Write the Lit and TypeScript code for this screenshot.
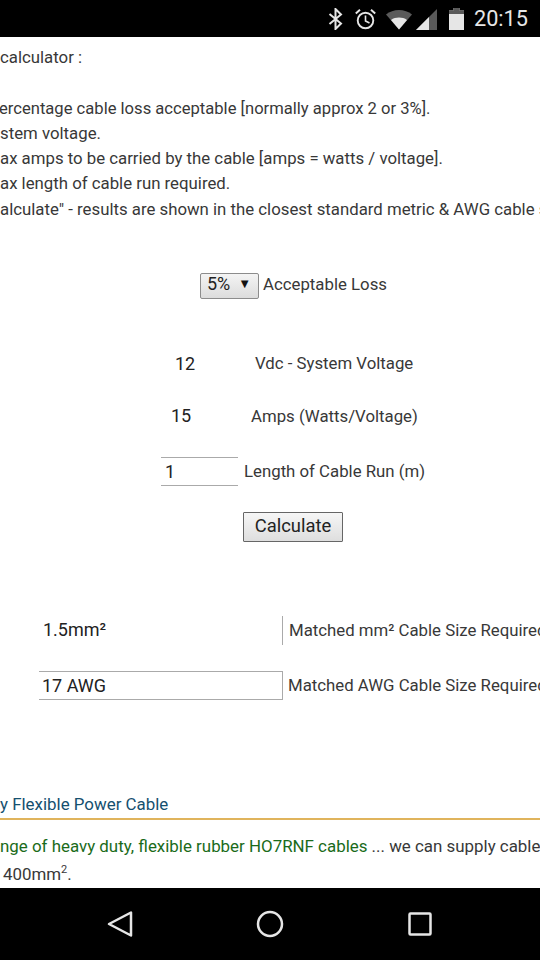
import { LitElement, html, css } from "lit";
import { customElement } from "lit/decorators.js";

@customElement("app-root")
export class AppRoot extends LitElement {
  static styles = css`
    :host { display: flex; flex-direction: column; width: 540px; height: 960px; overflow: hidden; background: #fff;
      font-family: Roboto, "Noto Sans", sans-serif; font-size: 16.8px; color: #383838; }
    .status { height: 37px; flex: none; background: #000; display: flex; align-items: center; justify-content: flex-end; padding-right: 12px; color: #e6e6e6; }
    .status svg { display: block; flex: none; }
    .bt { margin-right: 12px; }
    .alarm { margin-right: 10px; }
    .wifi { margin-right: 4px; }
    .sig { margin-right: 12px; }
    .batt { margin-right: 10px; }
    .time { font-size: 21.7px; line-height: 37px; color: #e6e6e6; }
    main { flex: 1; min-height: 0; overflow: hidden; display: flex; flex-direction: column; white-space: nowrap; }
    .intro { margin: 8.300px 0 0; line-height: 25.200px; font-size: 16.8px; }
    .s1 { margin-left: -1px; font-size: 16.6px; }
    .row { display: flex; align-items: center; }
    .r-loss { margin-top: 51px; padding-left: 200px; gap: 4px; }
    .r-loss .lab { padding-bottom: 4px; }
    .select { flex: none; width: 59px; height: 26px; box-sizing: border-box; border: 1px solid #8c8c8c; border-radius: 2px;
      background: linear-gradient(#f4f4f4, #dcdcdc); display: flex; align-items: center; justify-content: space-between; padding: 0 7px 4px 6px; color: #222; font-size: 18px; }
    .arrow { font-size: 13px; color: #111; }
    .value { flex: none; color: #222; font-size: 18px; }
    .r-v { margin-top: 53px; height: 26px; padding-left: 175px; }
    .r-v .value { width: 80px; }
    .r-a { margin-top: 30px; height: 26px; padding-left: 171px; }
    .r-a .value { width: 80px; }
    .r-l { margin-top: 30px; height: 28px; padding-left: 161px; gap: 6px; }
    .field { flex: none; box-sizing: border-box; width: 77px; height: 29px; border-top: 1px solid #aaa; border-bottom: 1px solid #aaa; padding-left: 4px; line-height: 27px; color: #222; font-size: 18px; }
    .btn { margin: 27px 0 0 243px; width: 100px; height: 30px; flex: none; box-sizing: border-box; border: 1px solid #666; border-radius: 1px;
      background: linear-gradient(#f6f6f6, #dedede); color: #222; font: 18.400px Roboto, sans-serif; padding: 0 0 3px; }
    .r-m { margin-top: 74px; height: 29px; }
    .r-m .value { box-sizing: border-box; width: 283px; height: 29px; padding-left: 43px; line-height: 27px; border-right: 1px solid #aaa; }
    .r-m .lab { margin-left: 6px; flex: none; padding-bottom: 2px; }
    .r-g { margin-top: 26px; height: 29px; }
    .awg { flex: none; box-sizing: border-box; margin-left: 39px; width: 244px; height: 29px; border: 1px solid #aaa; border-left: none; padding-left: 3px; line-height: 27px; color: #222; font-size: 18px; }
    .r-g .lab { margin-left: 5px; flex: none; padding-bottom: 2px; }
    .head { margin-top: 94px; padding-bottom: 4px; border-bottom: 2px solid #e0b45c; color: #15506f; line-height: 20px; height: 20px; flex: none; font-size: 16.9px; }
    .green { color: #1a6b1a; }
    .para { margin: 12px 0 0 0; line-height: 28px; font-size: 16.9px; }
    .para-2 { margin-left: 3px; }
    sup { font-size: 11px; line-height: 0; }
    nav { height: 72px; flex: none; background: #000; display: flex; align-items: center; justify-content: center; gap: 120px; }
    nav svg { display: block; }
  `;

  render() {
    return html`
      <div class="status">
        <svg class="bt" width="15" height="22" viewBox="0 0 15 22"><path d="M1.500 6 13 15.500 7.500 21V1L13 6.500 1.500 16" fill="none" stroke="#e6e6e6" stroke-width="2"/></svg>
        <svg class="alarm" width="21" height="22" viewBox="0 0 21 22" fill="none" stroke="#e6e6e6"><circle cx="10.500" cy="12.500" r="7.800" stroke-width="1.900"/><path d="M10.500 7.500V13L14.500 15" stroke-width="1.600"/><path d="M.8 5.500 5 1.800M20.200 5.500 16 1.800" stroke-width="2"/></svg>
        <svg class="wifi" width="26" height="22" viewBox="0 0 26 22"><path d="M0 6.500C7 .5 19 .5 26 6.500L13 21.500Z" fill="#5a5a5a"/><path d="M5 12C9.500 8.800 16.500 8.800 21 12L13 21.500Z" fill="#e6e6e6"/></svg>
        <svg class="sig" width="21" height="22" viewBox="0 0 21 22"><path d="M21 1V22H0Z" fill="#5a5a5a"/><path d="M13 9V22H0Z" fill="#e6e6e6"/></svg>
        <svg class="batt" width="15" height="22" viewBox="0 0 15 22"><path d="M4.500 0H10.500V2.500H15V22H0V2.500H4.500Z" fill="#e6e6e6"/><path d="M4.500 0H10.500V2.500H15V6H0V2.500H4.500Z" fill="#5a5a5a"/></svg>
        <span class="time">20:15</span>
      </div>
      <main>
        <p class="intro">calculator :<br><br><span class="s1">ercentage cable loss acceptable [normally approx 2 or 3%].</span><br>stem voltage.<br>ax amps to be carried by the cable [amps = watts / voltage].<br>ax length of cable run required.<br>alculate" - results are shown in the closest standard metric &amp; AWG cable s</p>
        <div class="row r-loss"><div class="select"><span>5%</span><span class="arrow">▼</span></div><span class="lab">Acceptable Loss</span></div>
        <div class="row r-v"><span class="value">12</span><span>Vdc - System Voltage</span></div>
        <div class="row r-a"><span class="value">15</span><span>Amps (Watts/Voltage)</span></div>
        <div class="row r-l"><div class="field">1</div><span>Length of Cable Run (m)</span></div>
        <button class="btn">Calculate</button>
        <div class="row r-m"><div class="value">1.5mm²</div><span class="lab">Matched mm² Cable Size Required</span></div>
        <div class="row r-g"><div class="awg">17 AWG</div><span class="lab">Matched AWG Cable Size Required</span></div>
        <div class="head">y Flexible Power Cable</div>
        <div class="para"><span class="green">nge of heavy duty, flexible rubber HO7RNF cables</span> ... we can supply cable<br><span class="para-2">400mm<sup>2</sup>.</span></div>
      </main>
      <nav>
        <svg width="30" height="30" viewBox="0 0 30 30"><path d="M26 3.500V26.500L4 15Z" fill="none" stroke="#e6e6e6" stroke-width="2.500" stroke-linejoin="round"/></svg>
        <svg width="30" height="30" viewBox="0 0 30 30"><circle cx="15" cy="15" r="12" fill="none" stroke="#e6e6e6" stroke-width="2.500"/></svg>
        <svg width="30" height="30" viewBox="0 0 30 30"><rect x="4.500" y="4.500" width="21" height="21" rx="1" fill="none" stroke="#e6e6e6" stroke-width="2.500"/></svg>
      </nav>
    `;
  }
}
